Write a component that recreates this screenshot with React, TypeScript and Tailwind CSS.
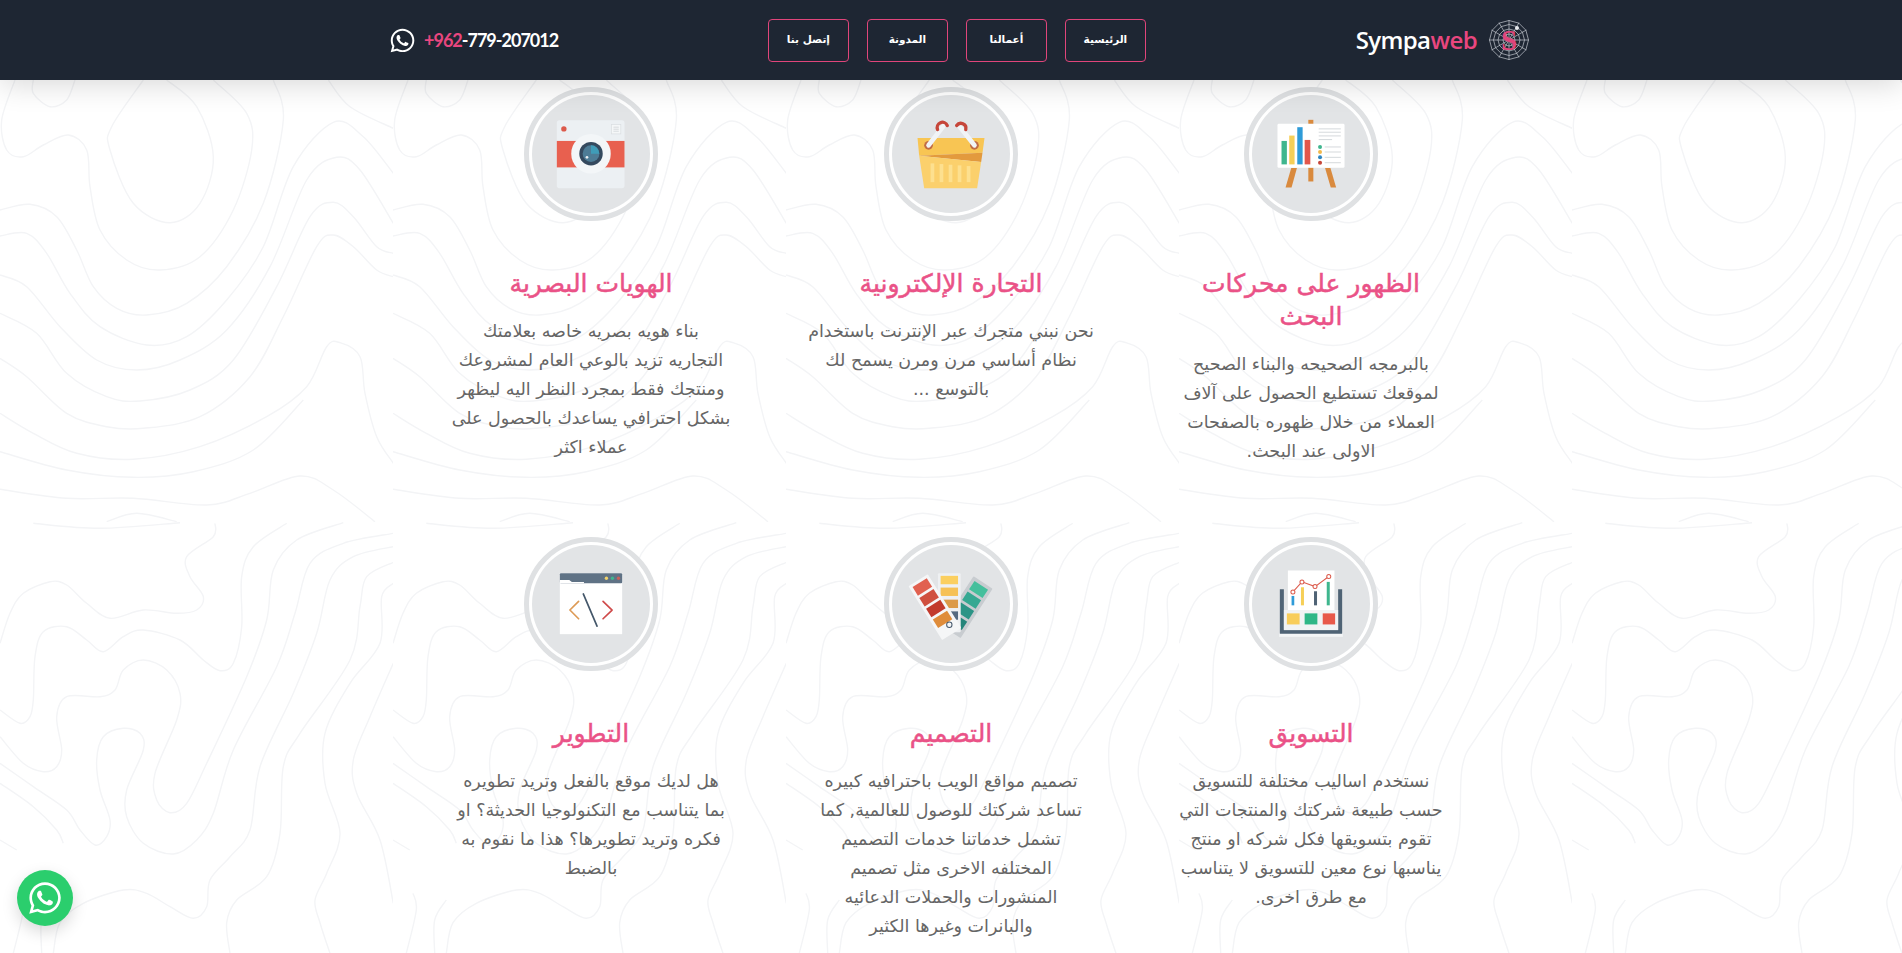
import React from "react";
import { FaWhatsapp } from "react-icons/fa";

type P = number[];
// Contour lines traced from the reference. "a" points: origin y=70, "b" points: origin y=400, both at 3x.
const A: P[] = [
  [100,30,100,70,150,110,200,90,225,30],
  [45,30,5,150,20,240,70,260,130,225,205,195,260,240,270,350,300,480,380,570,480,600,600,560,700,420,755,240,740,130,640,30],
  [430,30,335,170,330,240,400,400,510,458,600,400,640,260,590,110,500,30],
  [0,420,90,403,170,440,230,540,280,650,350,715,440,735,560,700,680,590,790,400,850,150,820,30],
  [0,498,80,490,140,550,210,670,300,770,440,825,560,800,680,690,790,530,880,290,1000,157,1090,200,1180,310],
  [0,615,80,650,180,770,290,870,410,900,540,870,680,780,810,590,920,330,1010,262,1080,300,1180,460],
  [0,730,110,790,200,910,320,980,420,993,570,960,700,870,830,650,930,440,1000,397,1060,440,1130,530,1180,550],
  [0,865,80,920,200,1030,320,1070,430,1075,600,1040,750,920,850,740,950,530,1000,495,1060,530,1130,600,1180,620],
  [0,1030,100,1090,230,1150,400,1168,600,1130,800,1040,920,950,980,830,1020,818,1080,860,1095,970,1130,1100,1180,1180],
  [985,30,1050,110,1180,175],
];
const B: P[] = [
  [0,155,200,210,400,232,580,215,760,150,910,0],
  [0,268,200,295,400,295,620,315,750,280,900,228,1000,270,1125,365],
  [100,370,300,385,540,368],
  [320,365,410,340,530,365],
  [645,370,640,410,560,470,570,530,610,590,590,630,530,640,430,630,330,655,260,610,200,555,150,545,70,580,30,640,0,730],
  [860,370,760,440,725,530,725,680,700,790,660,812,610,780,540,720,430,690,370,710,310,755,260,720,200,680,130,695,105,770,100,900,90,950,60,970,0,930],
  [1030,368,890,420,820,510,800,660,740,830,620,1090,560,1210,510,1238,470,1200,465,1120,530,960,540,880,500,810,430,780,370,810,345,870,300,890,200,890,170,950,185,1050,170,1100,130,1115,70,1090,0,1010],
  [1180,400,1030,430,930,490,885,640,830,800,700,1050,640,1240,590,1320,520,1362,430,1330,380,1250,380,1170,430,1050,420,1000,370,985,310,1010,290,1080,300,1170,330,1260,320,1310,285,1335,240,1290,200,1230,100,1160,0,1090],
  [1180,440,1060,470,990,540,950,700,880,880,780,1100,750,1290,690,1370,630,1440,620,1520,580,1555,510,1520,440,1480,370,1470,250,1510,180,1568,160,1660],
  [1180,487,1100,530,1080,620,1050,780,900,1000,850,1100,840,1300,800,1430,710,1500,680,1568,690,1660],
  [1180,550,1145,590,1140,730,1050,850,975,1000,975,1150,1020,1300,980,1420,945,1500,960,1568,990,1660],
  [1180,790,1110,950,1060,1080,1070,1180,1140,1320,1180,1510],
  [0,1150,100,1220,170,1290,190,1330],
  [0,1320,50,1350],
  [40,1660,70,1530,60,1480],
  [125,1660,125,1560,160,1500],
];

function curve(p: P, oy: number) {
  const pts: [number, number][] = [];
  for (let i = 0; i < p.length; i += 2) pts.push([p[i] / 3, oy + p[i + 1] / 3]);
  let d = `M${pts[0][0].toFixed(1)} ${pts[0][1].toFixed(1)}`;
  for (let i = 0; i < pts.length - 1; i++) {
    const a = pts[Math.max(i - 1, 0)], b = pts[i], c = pts[i + 1], e = pts[Math.min(i + 2, pts.length - 1)];
    d += `C${(b[0] + (c[0] - a[0]) / 6).toFixed(1)} ${(b[1] + (c[1] - a[1]) / 6).toFixed(1)} ${(c[0] - (e[0] - b[0]) / 6).toFixed(1)} ${(c[1] - (e[1] - b[1]) / 6).toFixed(1)} ${c[0].toFixed(1)} ${c[1].toFixed(1)}`;
  }
  return d;
}

function Contours() {
  return (
    <svg className="absolute inset-0 w-full h-full" aria-hidden="true">
      <defs>
        <pattern id="topo" width="393" height="953" patternUnits="userSpaceOnUse">
          <g fill="none" stroke="#f3f4f6" strokeWidth="1.4">
            {A.map((p, i) => <path key={i} d={curve(p, 70)} />)}
            {B.map((p, i) => <path key={i} d={curve(p, 400)} />)}
          </g>
        </pattern>
      </defs>
      <rect width="100%" height="100%" fill="url(#topo)" />
    </svg>
  );
}

function WebLogo() {
  const rays = Array.from({ length: 12 }, (_, i) => (i * Math.PI) / 6);
  const ring = (r: number) =>
    rays.map((a) => `${(20 + r * Math.cos(a)).toFixed(1)},${(20 + r * Math.sin(a)).toFixed(1)}`).join(" ");
  return (
    <svg width="40" height="40" viewBox="0 0 40 40" className="shrink-0">
      <g stroke="#c4c9d0" strokeWidth="0.7" fill="none">
        {rays.map((a, i) => (
          <line key={i} x1="20" y1="20" x2={20 + 20 * Math.cos(a)} y2={20 + 20 * Math.sin(a)} />
        ))}
        {[6, 11, 15.5, 19.5].map((r) => <polygon key={r} points={ring(r)} />)}
      </g>
      <text x="20" y="30" textAnchor="middle" fontFamily="Liberation Serif, serif" fontWeight="700" fontSize="29" fill="#e0457b">S</text>
      <circle cx="28" cy="8" r="2" fill="#e8eaee" />
    </svg>
  );
}

const Camera = () => (
  <g>
    <rect x="143" y="137" width="202" height="203" rx="8" fill="#ecf0f3" />
    <rect x="143" y="199" width="202" height="79" fill="#e8604f" />
    <circle cx="164" cy="163" r="8" fill="#dc5a4c" />
    <rect x="306" y="150" width="28" height="28" fill="#f5f7f8" stroke="#d9dde0" strokeWidth="2" />
    <path d="M312 158h16M312 164h16M312 170h16" stroke="#c9ced2" strokeWidth="2" />
    <circle cx="245" cy="237" r="59" fill="#f3f6f8" />
    <circle cx="245" cy="237" r="35" fill="#34495e" />
    <circle cx="245" cy="237" r="25" fill="#4d7c96" />
    <path d="M245 212a25 25 0 0 1 25 25h-25z" fill="#3f9cb8" />
    <circle cx="233" cy="248" r="4" fill="#e9eef2" />
  </g>
);

const Basket = () => (
  <g>
    <path d="M145 190h200l-6 44L150 243z" fill="#f8c553" />
    <path d="M150 243L339 234l-4 28z" fill="#e39a3d" />
    <path d="M150 243L335 262 323 340H165z" fill="#fbd06c" />
    <g fill="#fde08f">
      <rect x="184" y="266" width="11" height="56" />
      <rect x="211" y="268" width="11" height="54" />
      <rect x="238" y="270" width="11" height="52" />
      <rect x="265" y="272" width="11" height="50" />
      <rect x="292" y="274" width="11" height="48" />
    </g>
    <circle cx="178" cy="212" r="13" fill="#c06c45" />
    <circle cx="315" cy="212" r="13" fill="#c06c45" />
    <path d="M178 212L222 155M315 212L270 155" stroke="#f1f4f6" strokeWidth="14" strokeLinecap="round" />
    <path d="M205 165a15 15 0 0 1 29-12M262 153a15 15 0 0 1 27 12" fill="none" stroke="#c6463a" strokeWidth="10" strokeLinecap="round" />
  </g>
);

const Easel = () => (
  <g>
    <rect x="237" y="136" width="15" height="14" fill="#d98a3e" />
    <path d="M186 280h17l-16 58h-18z" fill="#d98a3e" />
    <rect x="237" y="278" width="15" height="42" fill="#d98a3e" />
    <path d="M287 280h16l17 58h-16z" fill="#d98a3e" />
    <rect x="145" y="148" width="200" height="131" rx="4" fill="#ffffff" />
    <rect x="157" y="199" width="16" height="70" fill="#3fb68e" />
    <rect x="180" y="183" width="16" height="86" fill="#f6cf57" />
    <rect x="204" y="158" width="16" height="111" fill="#2f9bd8" />
    <rect x="226" y="196" width="17" height="73" fill="#e2574c" />
    <path d="M268 163h66M268 173h66M268 184h66M268 195h40M286 217h48M286 232h48M286 248h48M286 264h48" stroke="#cdd1d5" strokeWidth="2.5" />
    <circle cx="272" cy="217" r="6" fill="#3fb68e" />
    <circle cx="272" cy="232" r="6" fill="#f2b84b" />
    <circle cx="272" cy="248" r="6" fill="#2f86c0" />
    <circle cx="272" cy="264" r="6" fill="#c6463a" />
  </g>
);

const Code = () => (
  <g>
    <rect x="152" y="130" width="186" height="182" fill="#ffffff" />
    <rect x="152" y="130" width="186" height="30" rx="3" fill="#5f7285" />
    <path d="M152 160v-10h28l8 6h36v4z" fill="#ffffff" />
    <circle cx="291" cy="145" r="5" fill="#f1d36b" />
    <circle cx="309" cy="145" r="5" fill="#3fb68e" />
    <circle cx="327" cy="145" r="5" fill="#c9605a" />
    <g fill="none" strokeWidth="5" strokeLinecap="round" strokeLinejoin="round">
      <path d="M208 214l-26 26 26 26" stroke="#dd9a55" />
      <path d="M281 214l27 26-27 26" stroke="#cf4a4a" />
      <path d="M222 192l41 96" stroke="#44576a" />
    </g>
  </g>
);

const Swatches = () => (
  <g>
    <g transform="rotate(33 250 305)">
      <rect x="212" y="132" width="68" height="176" rx="3" fill="#c8ccd0" />
      <rect x="222" y="142" width="48" height="30" fill="#45bf9c" />
      <rect x="222" y="180" width="48" height="30" fill="#36a892" />
      <rect x="222" y="218" width="48" height="30" fill="#2c9486" />
      <rect x="222" y="256" width="48" height="30" fill="#25857a" />
    </g>
    <rect x="206" y="130" width="68" height="176" rx="3" fill="#eef0f2" />
    <rect x="214" y="138" width="52" height="25" fill="#fbcf5f" />
    <rect x="214" y="173" width="52" height="25" fill="#f6c155" />
    <rect x="214" y="209" width="52" height="25" fill="#dc9a48" />
    <rect x="214" y="244" width="52" height="25" fill="#556a80" />
    <g transform="rotate(-32 240 300)">
      <rect x="206" y="124" width="68" height="190" rx="3" fill="#f5f6f7" />
      <rect x="215" y="133" width="50" height="30" fill="#e1604f" />
      <rect x="215" y="171" width="50" height="30" fill="#d0503f" />
      <rect x="215" y="209" width="50" height="30" fill="#c23a2c" />
      <rect x="215" y="247" width="50" height="30" fill="#df8c3a" />
    </g>
    <circle cx="240" cy="284" r="8" fill="none" stroke="#44576a" strokeWidth="3" />
  </g>
);

const Chart = () => (
  <g>
    <rect x="150" y="308" width="190" height="12" fill="#f3f5f6" />
    <path d="M158 178v127h174V178" fill="none" stroke="#4f6375" strokeWidth="12" />
    <rect x="176" y="122" width="139" height="122" fill="#ffffff" />
    <rect x="164" y="240" width="162" height="60" fill="#f1f3f4" />
    <rect x="173" y="250" width="38" height="33" fill="#f8cd5a" />
    <rect x="226" y="250" width="38" height="33" fill="#2fb787" />
    <rect x="280" y="250" width="37" height="33" fill="#e8594a" />
    <rect x="187" y="198" width="8" height="28" fill="#2f9bd8" />
    <rect x="215" y="172" width="9" height="54" fill="#f6cf57" />
    <rect x="254" y="184" width="9" height="42" fill="#4f6375" />
    <rect x="292" y="156" width="9" height="70" fill="#3fb68e" />
    <polyline points="191,186 218,156 257,170 298,140" fill="none" stroke="#dc5a4c" strokeWidth="3" />
    {[[191, 186], [218, 156], [257, 170], [298, 140]].map(([x, y]) => (
      <circle key={x} cx={x} cy={y} r="6" fill="#ffffff" stroke="#dc5a4c" strokeWidth="3" />
    ))}
  </g>
);

type Card = { title: string[]; lines: string[]; art: React.ReactNode; oy: number };

const rows: Card[][] = [
  [
    {
      title: ["الظهور على محركات", "البحث"],
      lines: ["بالبرمجه الصحيحه والبناء الصحيح", "لموقعك تستطيع الحصول على آلاف", "العملاء من خلال ظهوره بالصفحات", "الاولى عند البحث."],
      art: <Easel />, oy: 38,
    },
    {
      title: ["التجارة الإلكترونية"],
      lines: ["نحن نبني متجرك عبر الإنترنت باستخدام", "نظام أساسي مرن ومرن يسمح لك", "بالتوسع ..."],
      art: <Basket />, oy: 38,
    },
    {
      title: ["الهويات البصرية"],
      lines: ["بناء هويه بصريه خاصه بعلامتك", "التجاريه تزيد بالوعي العام لمشروعك", "ومنتجك فقط بمجرد النظر اليه ليظهر", "بشكل احترافي يساعدك بالحصول على", "عملاء اكثر"],
      art: <Camera />, oy: 38,
    },
  ],
  [
    {
      title: ["التسويق"],
      lines: ["نستخدم اساليب مختلفة للتسويق", "حسب طبيعة شركتك والمنتجات التي", "تقوم بتسويقها فكل شركه او منتج", "يناسبها نوع معين للتسويق لا يتناسب", "مع طرق اخرى."],
      art: <Chart />, oy: 22,
    },
    {
      title: ["التصميم"],
      lines: ["تصميم مواقع الويب باحترافيه كبيره", "تساعد شركتك للوصول للعالمية, كما", "تشمل خدماتنا خدمات التصميم", "المختلفه الاخرى مثل تصميم", "المنشورات والحملات الدعائيه", "والبانرات وغيرها الكثير"],
      art: <Swatches />, oy: 22,
    },
    {
      title: ["التطوير"],
      lines: ["هل لديك موقع بالفعل وتريد تطويره", "بما يتناسب مع التكنولوجيا الحديثة؟ او", "فكره وتريد تطويرها؟ هذا ما نقوم به", "بالضبط"],
      art: <Code />, oy: 22,
    },
  ],
];

function Service({ card }: { card: Card }) {
  return (
    <div className="flex flex-col items-center text-center">
      <div className="w-[134px] h-[134px] rounded-full border-[5px] border-[#dfe1e3] bg-white p-[3px]">
        <div className="w-full h-full rounded-full bg-[#e2e4e6]" />
      </div>
      <svg width="134" height="134" viewBox={`45 ${card.oy} 400 400`} className="-mt-[134px] relative">
        {card.art}
      </svg>
      <h3 className="mt-[46px] text-[25px] leading-[33px] font-normal text-[#ea5287] [-webkit-text-stroke:0.5px_#ea5287]">
        {card.title.map((t) => <div key={t} className="whitespace-nowrap">{t}</div>)}
      </h3>
      <div className="mt-[17px] text-[17.5px] leading-[29px] text-[#666666]">
        {card.lines.map((l) => <div key={l} className="whitespace-nowrap">{l}</div>)}
      </div>
    </div>
  );
}

export default function App() {
  return (
    <div className="relative h-screen overflow-hidden bg-white font-['DejaVu_Sans',sans-serif]">
      <Contours />
      <header className="relative z-10 h-[80px] bg-[#1e2633] flex items-center justify-between pl-[389px] pr-[373px] shadow-[0_4px_30px_rgba(0,0,0,0.16)]">
        <div className="flex items-center gap-[8px] text-white">
          <FaWhatsapp className="text-[27px]" />
          <span className="font-['Lato',sans-serif] font-bold text-[18px] tracking-[-1px]">
            <span className="text-[#e9467f]">+962</span>-779-207012
          </span>
        </div>
        <nav dir="rtl" className="flex gap-[18px]">
          {["الرئيسية", "أعمالنا", "المدونة", "إتصل بنا"].map((t) => (
            <a key={t} className="w-[81px] h-[43px] flex items-center justify-center rounded-[4px] border border-[#e0457b] text-white text-[10.5px] font-bold">
              {t}
            </a>
          ))}
        </nav>
        <div className="flex items-center gap-[12px]">
          <span className="font-['Open_Sans',sans-serif] font-semibold text-[24px] tracking-[-0.6px] text-white">
            Sympa<span className="text-[#e9467f]">web</span>
          </span>
          <WebLogo />
        </div>
      </header>
      <main dir="rtl" className="relative w-[1080px] mx-auto pt-[7px] flex flex-col">
        {rows.map((row, i) => (
          <div key={i} className={`grid grid-cols-3 ${i === 0 ? "h-[450px]" : ""}`}>
            {row.map((c) => <Service key={c.title[0]} card={c} />)}
          </div>
        ))}
      </main>
      <a className="fixed left-[17px] bottom-[27px] z-20 w-[56px] h-[56px] rounded-full bg-[#2bce6d] text-white flex items-center justify-center shadow-[0_6px_16px_rgba(0,0,0,0.15)]">
        <FaWhatsapp className="text-[36px]" />
      </a>
    </div>
  );
}
